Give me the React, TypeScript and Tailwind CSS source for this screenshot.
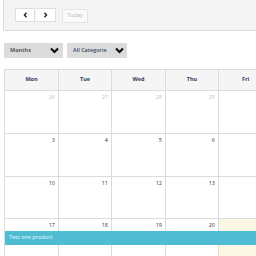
import React from "react";

const cols = [54, 53, 54, 53, 54];
const heads = ["Mon", "Tue", "Wed", "Thu", "Fri"];
const rows: { n: string; muted?: boolean }[][] = [
  [{ n: "26", muted: true }, { n: "27", muted: true }, { n: "28", muted: true }, { n: "29", muted: true }, { n: "" }],
  [{ n: "3" }, { n: "4" }, { n: "5" }, { n: "6" }, { n: "" }],
  [{ n: "10" }, { n: "11" }, { n: "12" }, { n: "13" }, { n: "" }],
  [{ n: "17" }, { n: "18" }, { n: "19" }, { n: "20" }, { n: "" }],
];
const rowH = [43, 43, 42, 60];

function Chevron() {
  return (
    <svg width="9" height="7" viewBox="0 0 9 7">
      <path d="M1 1.5 L4.5 5 L8 1.5" stroke="#111" strokeWidth="2.2" fill="none" />
    </svg>
  );
}

export default function App() {
  return (
    <div className="w-[256px] h-[256px] overflow-hidden bg-white relative" style={{ fontFamily: '"Open Sans", "Liberation Sans", sans-serif' }}>
      <div className="ml-[3px] w-[300px] h-[31px] bg-[#f4f4f4] border-l border-b border-[#dcdcdc] flex items-start pt-[8px] pl-[11px]">
        <div className="flex">
          <div className="w-[20px] h-[14px] bg-white border border-[#dedede] flex items-center justify-center">
            <svg width="5" height="6" viewBox="0 0 5 6"><path d="M3.5 0.8 L1.5 3 L3.5 5.2" stroke="#222" strokeWidth="1.4" fill="none" /></svg>
          </div>
          <div className="w-[20px] h-[14px] bg-white border border-[#dedede] border-l-0 flex items-center justify-center ml-[1px]">
            <svg width="5" height="6" viewBox="0 0 5 6"><path d="M1.5 0.8 L3.5 3 L1.5 5.2" stroke="#222" strokeWidth="1.4" fill="none" /></svg>
          </div>
        </div>
        <div className="ml-[6px] mt-[1px] w-[26px] h-[14px] bg-[#fafafa] border border-[#e4e4e4] flex items-center justify-center text-[5.5px] text-[#b8b8b8] leading-none">
          Today
        </div>
      </div>
      <div className="flex gap-[4px] ml-[4px] mt-[12px]">
        <div className="w-[59px] h-[15px] bg-[#dcdcdc] flex items-center justify-between pl-[6px] pr-[4px]">
          <span className="text-[5.5px] font-bold text-[#5a5a5a] leading-none">Months</span>
          <Chevron />
        </div>
        <div className="w-[60px] h-[15px] bg-[#dcdcdc] flex items-center justify-between pl-[6px] pr-[3px]">
          <span className="text-[5.5px] font-semibold text-[#3a4a6a] leading-none">All Categorie</span>
          <Chevron />
        </div>
      </div>
      <div className="ml-[4px] mt-[11px] w-[300px] border-t border-l border-[#dcdcdc]">
        <div className="flex h-[21px] bg-[#f5f5f5] border-b border-[#dcdcdc]">
          {heads.map((h, i) => (
            <div key={h} style={{ width: cols[i] }} className="border-r border-[#dcdcdc] flex items-center justify-center text-[5.5px] font-bold text-[#2f3e5c] leading-none">
              {h}
            </div>
          ))}
        </div>
        {rows.map((r, ri) => (
          <div key={ri} className="relative flex border-b border-[#dcdcdc]" style={{ height: rowH[ri] }}>
            {r.map((c, ci) => (
              <div key={ci} style={{ width: cols[ci] }} className={`border-r border-[#dcdcdc] flex justify-end pr-[3px] pt-[4px] ${ri === 3 && ci === 4 ? "bg-[#fcf7e4]" : ""}`}>
                <span className={`text-[5.5px] leading-none ${c.muted ? "text-[#c4c4c4]" : "text-[#333]"}`}>{c.n}</span>
              </div>
            ))}
            {ri === 3 && (
              <div className="absolute left-0 right-0 top-[12px] h-[14px] bg-[#4fbcd4] flex items-center pl-[4px] text-[5.5px] text-[#e8f8fc] leading-none">
                Test one product
              </div>
            )}
          </div>
        ))}
      </div>
    </div>
  );
}
